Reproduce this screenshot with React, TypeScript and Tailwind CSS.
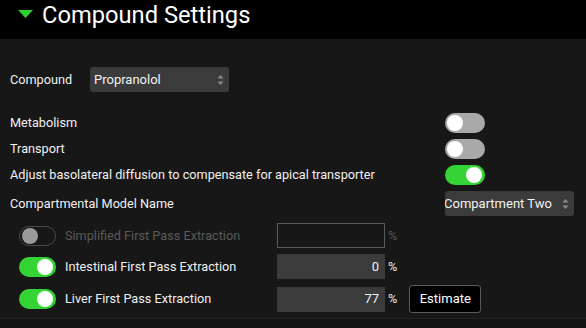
import React from 'react';

function Toggle({ on, disabled, className = '' }: { on?: boolean; disabled?: boolean; className?: string }) {
  if (disabled) {
    return (
      <div className={`relative shrink-0 h-[20px] rounded-full border border-[#4a4a4a] ${className}`}>
        <div className="absolute left-[2px] top-[1px] w-[16px] h-[16px] rounded-full bg-[#9a9a9a]" />
      </div>
    );
  }
  return (
    <div className={`relative shrink-0 h-[20px] rounded-full ${on ? 'bg-[#33d433]' : 'bg-[#a9a9a9]'} ${className}`}>
      <div
        className={`absolute top-[2px] w-[16px] h-[16px] rounded-full bg-white ${on ? 'right-[3px]' : 'left-[2px]'}`}
      />
    </div>
  );
}

function Arrows() {
  return (
    <svg width="7" height="12" viewBox="0 0 7 12" className="shrink-0">
      <path d="M3.5 1 L6.5 4.5 L0.5 4.5 Z" fill="#8a8a8a" />
      <path d="M3.5 11 L6.5 7.5 L0.5 7.5 Z" fill="#8a8a8a" />
    </svg>
  );
}

function Select({ value, className = '', clip }: { value: string; className?: string; clip?: boolean }) {
  return (
    <div className={`flex items-center h-[25px] rounded-[3px] bg-[#3b3b3b] pr-[5px] ${className}`}>
      <div className="flex-1 overflow-hidden whitespace-nowrap">
        <span className={`block text-[13px] text-[#f2f2f2] ${clip ? '-ml-[1px]' : 'pl-[4px]'}`}>{value}</span>
      </div>
      <Arrows />
    </div>
  );
}

export default function App() {
  return (
    <div className="w-[586px] h-[328px] bg-[#171717] flex flex-col overflow-hidden" style={{ fontFamily: 'Roboto, "Liberation Sans", sans-serif' }}>
      {/* Header */}
      <div className="h-[39px] bg-black flex items-start shrink-0">
        <svg width="15" height="8" viewBox="0 0 15 8" className="ml-[18px] mt-[10px] shrink-0">
          <path d="M0 0 L15 0 L7.5 8 Z" fill="#2fd02f" />
        </svg>
        <span className="ml-[9px] mt-[4px] text-[23.7px] leading-none text-white">Compound Settings</span>
      </div>

      {/* Body */}
      <div className="flex-1 flex flex-col pl-[10px] pr-[12px] pt-[28px] text-[12.7px] text-[#f0f0f0]">
        <div className="flex items-center h-[25px]">
          <span className="w-[80px]">Compound</span>
          <Select value="Propranolol" className="w-[139px]" />
        </div>

        <div className="flex items-center h-[20px] mt-[21px]">
          <span className="flex-1">Metabolism</span>
          <div className="w-[129px]"><Toggle className="w-[40px]" /></div>
        </div>
        <div className="flex items-center h-[20px] mt-[6px]">
          <span className="flex-1">Transport</span>
          <div className="w-[129px]"><Toggle className="w-[40px]" /></div>
        </div>
        <div className="flex items-center h-[20px] mt-[6px]">
          <span className="flex-1">Adjust basolateral diffusion to compensate for apical transporter</span>
          <div className="w-[129px]"><Toggle on className="w-[40px]" /></div>
        </div>
        <div className="flex items-center h-[25px] mt-[6px]">
          <span className="flex-1">Compartmental Model Name</span>
          <Select value="Compartment Two" clip className="w-[129px]" />
        </div>

        <div className="flex items-center h-[25px] mt-[7px] pl-[9px]">
          <Toggle disabled className="w-[37px]" />
          <span className="w-[221px] pl-[9px] text-[#5a5a5a]">Simplified First Pass Extraction</span>
          <div className="w-[108px] h-[25px] border border-[#5a5a5a]" />
          <span className="ml-[3px] text-[#5a5a5a]">%</span>
        </div>
        <div className="flex items-center h-[25px] mt-[6px] pl-[9px]">
          <Toggle on className="w-[37px]" />
          <span className="w-[221px] pl-[9px]">Intestinal First Pass Extraction</span>
          <div className="w-[108px] h-[25px] bg-[#3b3b3b] flex items-center justify-end pr-[6px] text-[13px]">0</div>
          <span className="ml-[3px]">%</span>
        </div>
        <div className="flex items-center h-[28px] mt-[6px] pl-[9px]">
          <Toggle on className="w-[37px]" />
          <span className="w-[221px] pl-[9px]">Liver First Pass Extraction</span>
          <div className="w-[108px] h-[25px] bg-[#3b3b3b] flex items-center justify-end pr-[6px] text-[13px]">77</div>
          <span className="ml-[3px]">%</span>
          <button className="ml-[12px] w-[72px] h-[28px] bg-black border border-[#5a5a5a] rounded-[3px] text-white text-[13px]">
            Estimate
          </button>
        </div>
      </div>
      <div className="h-[10px] shrink-0 border-t border-[#222] bg-[#131313]" />
    </div>
  );
}
